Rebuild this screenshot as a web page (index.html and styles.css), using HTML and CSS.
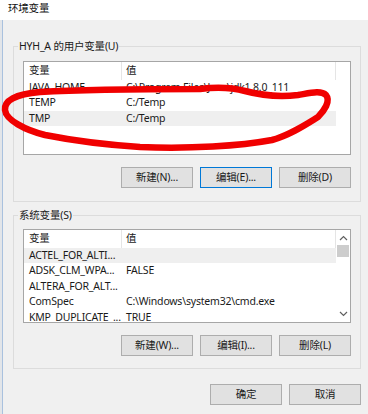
FILE: index.html
```html
<!DOCTYPE html>
<html lang="zh-CN">
<head>
<meta charset="utf-8">
<title>环境变量</title>
<link rel="stylesheet" href="styles.css">
</head>
<body>
<div class="screen">
  <div class="titlebar">环境变量</div>
  <div class="body">
    <div class="edge"></div>
    <div class="client">
      <fieldset class="group g1">
        <legend>HYH_A 的用户变量(U)</legend>
        <div class="list">
          <div class="grid">
            <div class="row head"><span class="c1">变量</span><span class="c2">值</span></div>
            <div class="row"><span class="c1">JAVA_HOME</span><span class="c2">C:\Program Files\Java\jdk1.8.0_111</span></div>
            <div class="row"><span class="c1">TEMP</span><span class="c2">C:/Temp</span></div>
            <div class="row sel"><span class="c1">TMP</span><span class="c2">C:/Temp</span></div>
          </div>
        </div>
        <div class="buttons">
          <button>新建(N)...</button>
          <button class="focus">编辑(E)...</button>
          <button>删除(D)</button>
        </div>
      </fieldset>
      <fieldset class="group g2">
        <legend>系统变量(S)</legend>
        <div class="list">
          <div class="grid">
            <div class="row head"><span class="c1">变量</span><span class="c2">值</span></div>
            <div class="row sel"><span class="c1">ACTEL_FOR_ALTI...</span><span class="c2"></span></div>
            <div class="row"><span class="c1">ADSK_CLM_WPA...</span><span class="c2">FALSE</span></div>
            <div class="row"><span class="c1">ALTERA_FOR_ALT...</span><span class="c2"></span></div>
            <div class="row"><span class="c1">ComSpec</span><span class="c2">C:\Windows\system32\cmd.exe</span></div>
            <div class="row"><span class="c1">KMP_DUPLICATE_...</span><span class="c2">TRUE</span></div>
          </div>
          <div class="scroll">
            <svg class="arrow" width="9" height="6" viewBox="0 0 9 6"><polyline points="1,5 4.5,1.5 8,5" fill="none" stroke="#606060" stroke-width="1.2"/></svg>
            <div class="thumb"></div>
            <div class="track"></div>
            <svg class="arrow" width="9" height="6" viewBox="0 0 9 6"><polyline points="1,1 4.5,4.5 8,1" fill="none" stroke="#606060" stroke-width="1.2"/></svg>
          </div>
        </div>
        <div class="buttons">
          <button>新建(W)...</button>
          <button>编辑(I)...</button>
          <button>删除(L)</button>
        </div>
      </fieldset>
      <div class="footer">
        <button>确定</button>
        <button>取消</button>
      </div>
    </div>
  </div>
  <svg class="ink" width="368" height="414" viewBox="0 0 368 414">
    <path d="M 318 117 C 324 111, 331 101, 326 95 C 321 90, 310 93, 298 95 C 280 97, 260 95, 245 91 C 230 87, 215 87, 200 89 C 160 89, 90 89, 40 92 C 15 94, 4 101, 5 110 C 6 120, 25 130, 45 135 C 75 141, 110 145, 140 147 C 190 149, 240 146, 272 140 C 290 135, 305 125, 318 117" fill="none" stroke="#f00000" stroke-width="6.5" stroke-linecap="round" stroke-linejoin="round"/>
  </svg>
</div>
</body>
</html>
```
FILE: styles.css
```css
* { box-sizing: border-box; }
html, body { margin: 0; padding: 0; }
body {
  width: 368px;
  height: 414px;
  overflow: hidden;
  background: #f0f0f0;
  font-family: "Noto Sans", "Noto Sans CJK SC", sans-serif;
  font-size: 10.5px;
  letter-spacing: -0.2px;
  color: #1a1a1a;
}
.screen {
  position: relative;
  width: 368px;
  height: 414px;
  display: flex;
  flex-direction: column;
}
.titlebar {
  height: 20px;
  background: #fff;
  padding: 1px 0 0 8px;
  line-height: 14px;
  color: #111;
}
.body {
  flex: 1;
  display: flex;
}
.edge {
  width: 3px;
  background: #e2e5e9;
  border-right: 1px solid #a9c1de;
}
.client {
  flex: 1;
  padding: 19px 0 0 10px;
}
.group {
  width: 348px;
  margin: 0;
  padding: 8px 9px 13px 9px;
  border: 1px solid #dcdcdc;
  min-width: 0;
}
.group legend {
  margin-left: -5px;
  padding: 0 1px;
  line-height: 14px;
  height: 14px;
}
.g2 {
  margin-top: 6px;
  padding-top: 7px;
  padding-bottom: 12px;
}
.list {
  height: 94px;
  border: 1px solid #a6a6a6;
  background: #fff;
  display: flex;
  overflow: hidden;
}
.grid {
  width: 312px;
  flex: none;
}
.row {
  display: flex;
  height: 15.5px;
  line-height: 15.5px;
  white-space: nowrap;
}
.row.head {
  height: 17.5px;
  line-height: 17px;
}
.row.sel {
  background: #efefef;
}
.c1 {
  width: 98px;
  padding-left: 5px;
  overflow: hidden;
}
.c2 {
  width: 214px;
  padding-left: 4px;
  overflow: hidden;
}
.head .c1, .head .c2 {
  border-right: 1px solid #e5e5e5;
}
.scroll {
  width: 14px;
  margin-left: auto;
  display: flex;
  flex-direction: column;
  align-items: center;
  background: #fff;
}
.scroll .arrow {
  margin: 5px 0 4px;
}
.scroll .arrow:last-child {
  margin: 4px 0 5px;
}
.thumb {
  width: 12px;
  height: 12px;
  background: #cdcdcd;
}
.track {
  flex: 1;
}
.buttons {
  display: flex;
  justify-content: flex-end;
  gap: 7px;
  margin-top: 12px;
}
button {
  width: 72px;
  height: 21px;
  margin: 0;
  padding: 0;
  background: #e1e1e1;
  border: 1px solid #adadad;
  font: inherit;
  letter-spacing: inherit;
  color: #1a1a1a;
  line-height: 19px;
}
button.focus {
  border-color: #0078d7;
}
.footer {
  width: 348px;
  display: flex;
  justify-content: flex-end;
  gap: 7px;
  margin-top: 15px;
}
.ink {
  position: absolute;
  left: 0;
  top: 0;
  pointer-events: none;
}
```
